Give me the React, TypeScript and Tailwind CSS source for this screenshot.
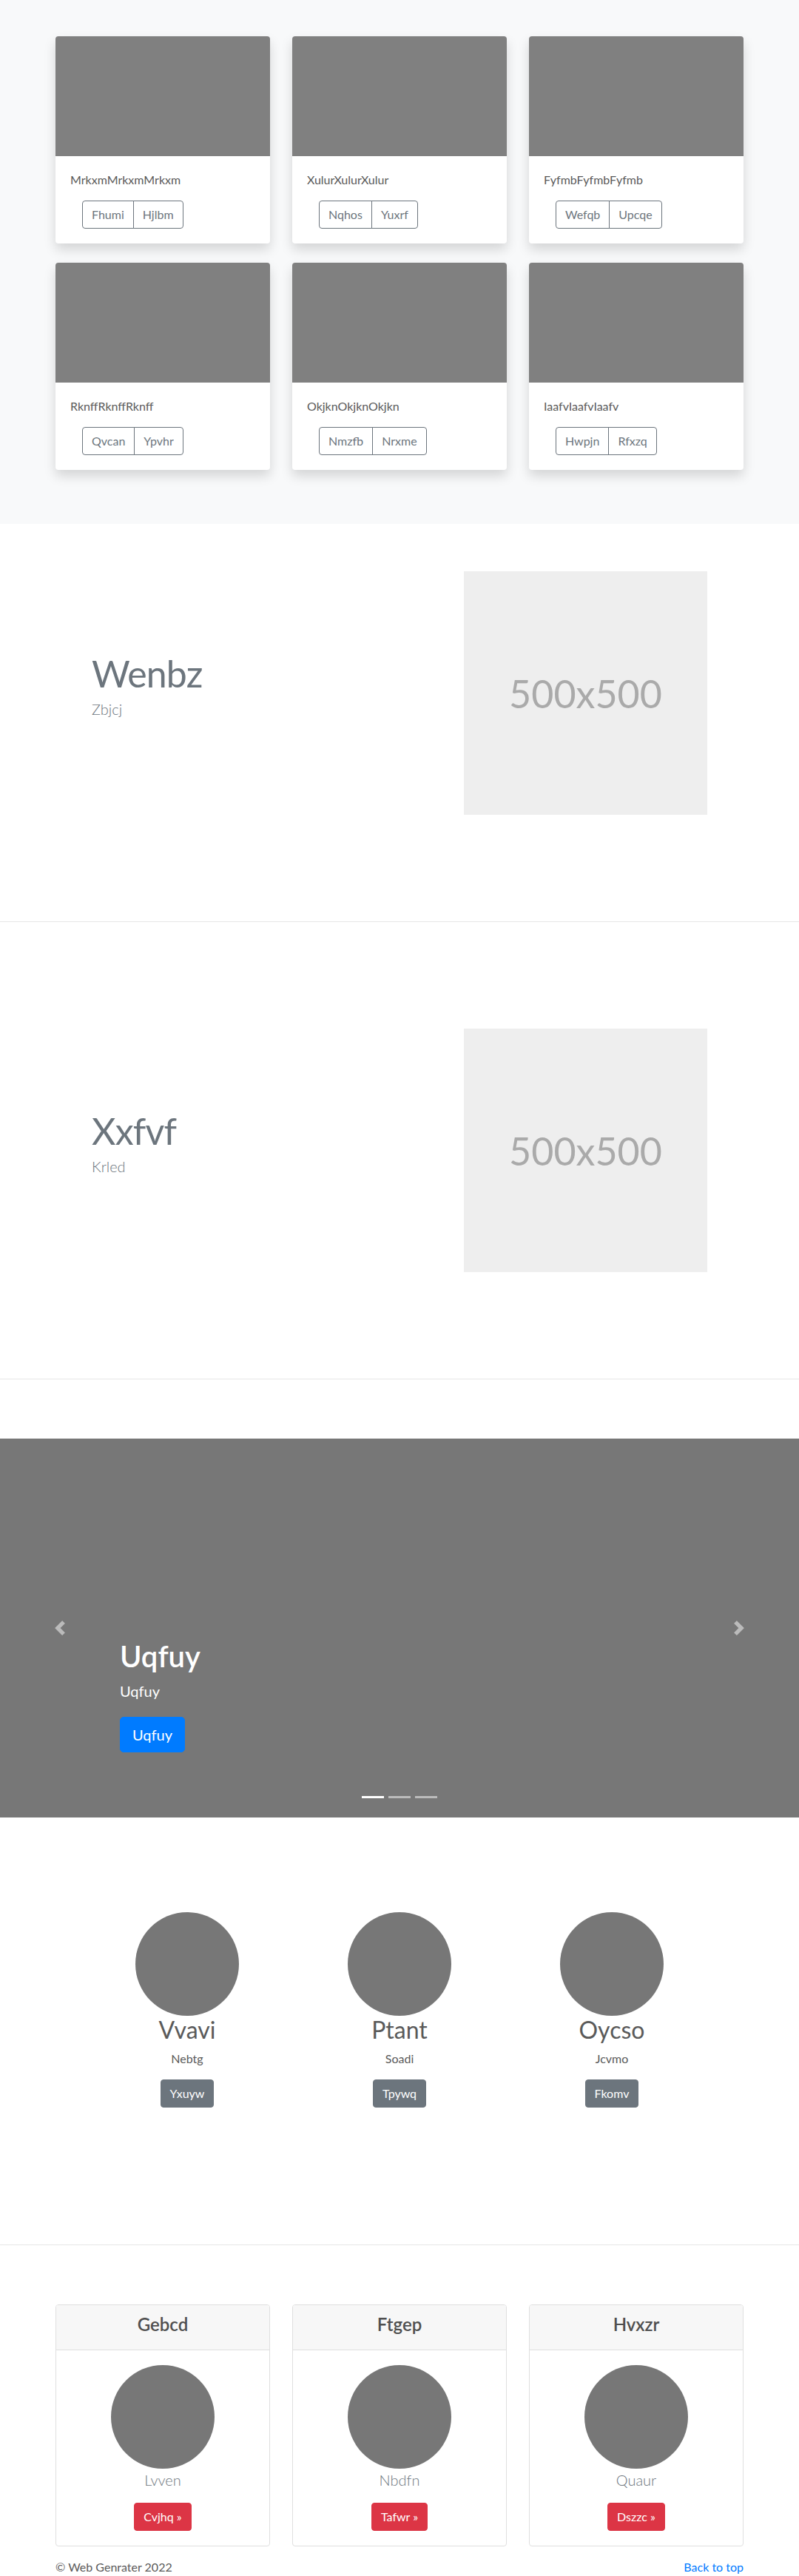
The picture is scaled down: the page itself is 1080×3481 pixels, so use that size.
import React from 'react'

const albumCards = [
  { text: 'MrkxmMrkxmMrkxm', actions: ['Fhumi', 'Hjlbm'] },
  { text: 'XulurXulurXulur', actions: ['Nqhos', 'Yuxrf'] },
  { text: 'FyfmbFyfmbFyfmb', actions: ['Wefqb', 'Upcqe'] },
  { text: 'RknffRknffRknff', actions: ['Qvcan', 'Ypvhr'] },
  { text: 'OkjknOkjknOkjkn', actions: ['Nmzfb', 'Nrxme'] },
  { text: 'IaafvIaafvIaafv', actions: ['Hwpjn', 'Rfxzq'] },
]

const featurettes = [
  { title: 'Wenbz', lead: 'Zbjcj' },
  { title: 'Xxfvf', lead: 'Krled' },
]

const marketing = [
  { name: 'Vvavi', text: 'Nebtg', action: 'Yxuyw' },
  { name: 'Ptant', text: 'Soadi', action: 'Tpywq' },
  { name: 'Oycso', text: 'Jcvmo', action: 'Fkomv' },
]

const pricing = [
  { title: 'Gebcd', text: 'Lvven', action: 'Cvjhq »' },
  { title: 'Ftgep', text: 'Nbdfn', action: 'Tafwr »' },
  { title: 'Hvxzr', text: 'Quaur', action: 'Dszzc »' },
]

function AlbumCard({ text, actions }: { text: string; actions: string[] }) {
  return (
    <div className="overflow-hidden rounded bg-white shadow-[0_8px_16px_rgba(0,0,0,0.15)]">
      <div className="h-[162px] bg-[#808080]" />
      <div className="p-5">
        <p className="mb-4 text-base leading-6 text-[#5a5a5a]">{text}</p>
        <div className="ml-4 flex">
          {actions.map((a, i) => (
            <button
              key={a}
              className={
                i === 0
                  ? 'rounded-l border border-[#6c757d] px-3 py-1.5 text-base leading-6 text-[#6c757d]'
                  : '-ml-px rounded-r border border-[#6c757d] px-3 py-1.5 text-base leading-6 text-[#6c757d]'
              }
            >
              {a}
            </button>
          ))}
        </div>
      </div>
    </div>
  )
}

function Featurette({ title, lead }: { title: string; lead: string }) {
  return (
    <section className="py-16">
      <div className="mx-auto flex w-[960px] items-center">
        <div className="w-[567px] pl-16">
          <h2 className="mb-2 text-[50px] font-normal leading-none tracking-[-0.8px] text-[#6c757d]">{title}</h2>
          <p className="mb-4 text-xl font-light leading-[1.5] text-[#6c757d]">{lead}</p>
        </div>
        <div className="flex size-[329px] items-center justify-center bg-[#eeeeee] text-[52px] text-[#aaaaaa]">
          500x500
        </div>
      </div>
    </section>
  )
}

function Divider() {
  return <div className="my-20 h-px bg-[#e6e6e6]" />
}

function Chevron({ dir }: { dir: 'prev' | 'next' }) {
  return (
    <svg width="20" height="20" viewBox="0 0 8 8" className="opacity-50">
      <path
        fill="#fff"
        d={dir === 'prev' ? 'M5.25 0l-4 4 4 4 1.5-1.5L4.25 4l2.5-2.5L5.25 0z' : 'M2.75 0l-1.5 1.5L3.75 4l-2.5 2.5L2.75 8l4-4-4-4z'}
      />
    </svg>
  )
}

export default function App() {
  return (
    <div className="font-['Lato',sans-serif] text-[#5a5a5a]">
      {/* Album */}
      <section className="bg-[#f8f9fa] pt-[49px] pb-[73px]">
        <div className="mx-auto grid w-[930px] grid-cols-3 gap-x-[30px] gap-y-[26px]">
          {albumCards.map(c => (
            <AlbumCard key={c.text} text={c.text} actions={c.actions} />
          ))}
        </div>
      </section>

      {/* Featurettes */}
      <Featurette title={featurettes[0].title} lead={featurettes[0].lead} />
      <Divider />
      <Featurette title={featurettes[1].title} lead={featurettes[1].lead} />
      <Divider />

      {/* Carousel */}
      <section className="relative mb-16 h-[512px] bg-[#777777]">
        <button className="absolute inset-y-0 left-0 flex w-[15%] items-center justify-center">
          <Chevron dir="prev" />
        </button>
        <button className="absolute inset-y-0 right-0 flex w-[15%] items-center justify-center">
          <Chevron dir="next" />
        </button>
        <div className="absolute bottom-[88px] left-[15%] right-[15%] text-left text-white">
          <h1 className="mb-2 text-[40px] font-semibold leading-[1.2]">Uqfuy</h1>
          <p className="mb-5 text-xl leading-[1.5]">Uqfuy</p>
          <button className="block rounded-[5px] border border-[#007bff] bg-[#007bff] px-4 py-2 text-xl leading-[1.5] text-white">
            Uqfuy
          </button>
        </div>
        <div className="absolute bottom-[26px] left-0 right-0 flex justify-center gap-[6px]">
          <span className="h-[3px] w-[30px] bg-white" />
          <span className="h-[3px] w-[30px] bg-white/50" />
          <span className="h-[3px] w-[30px] bg-white/50" />
        </div>
      </section>

      {/* Marketing */}
      <section className="pt-16 pb-[89px]">
        <div className="mx-auto grid w-[861px] grid-cols-3 text-center">
          {marketing.map(m => (
            <div key={m.name} className="flex flex-col items-center">
              <div className="size-[140px] rounded-full bg-[#777777]" />
              <h2 className="mb-2 text-[32px] leading-[1.2] text-[#5a5a5a]">{m.name}</h2>
              <p className="mb-4 text-base leading-6 text-[#5a5a5a]">{m.text}</p>
              <button className="mb-4 rounded border border-[#6c757d] bg-[#6c757d] px-3 py-1.5 text-base leading-6 text-white">
                {m.action}
              </button>
            </div>
          ))}
        </div>
      </section>
      <Divider />

      {/* Pricing-style cards */}
      <section className="mx-auto grid w-[930px] grid-cols-3 gap-[30px]">
        {pricing.map(p => (
          <div key={p.title} className="overflow-hidden rounded border border-[#dfdfdf] bg-white text-center">
            <div className="border-b border-[#dfdfdf] bg-[#f7f7f7] px-5 py-3">
              <h4 className="mb-2 text-2xl font-semibold leading-7 text-[#4f4f4f]">{p.title}</h4>
            </div>
            <div className="flex flex-col items-center p-5">
              <div className="size-[140px] rounded-full bg-[#777777]" />
              <p className="mb-4 text-xl font-light leading-[1.5] text-[#6c757d]">{p.text}</p>
              <button className="rounded border border-[#dc3545] bg-[#dc3545] px-3 py-1.5 text-base leading-6 text-white">
                {p.action}
              </button>
            </div>
          </div>
        ))}
      </section>

      {/* Footer */}
      <footer className="mx-auto mt-4 flex w-[930px] justify-between text-base leading-6">
        <p className="text-[#5a5a5a]">© Web Genrater 2022</p>
        <a href="#" className="text-[#007bff]">Back to top</a>
      </footer>
    </div>
  )
}
